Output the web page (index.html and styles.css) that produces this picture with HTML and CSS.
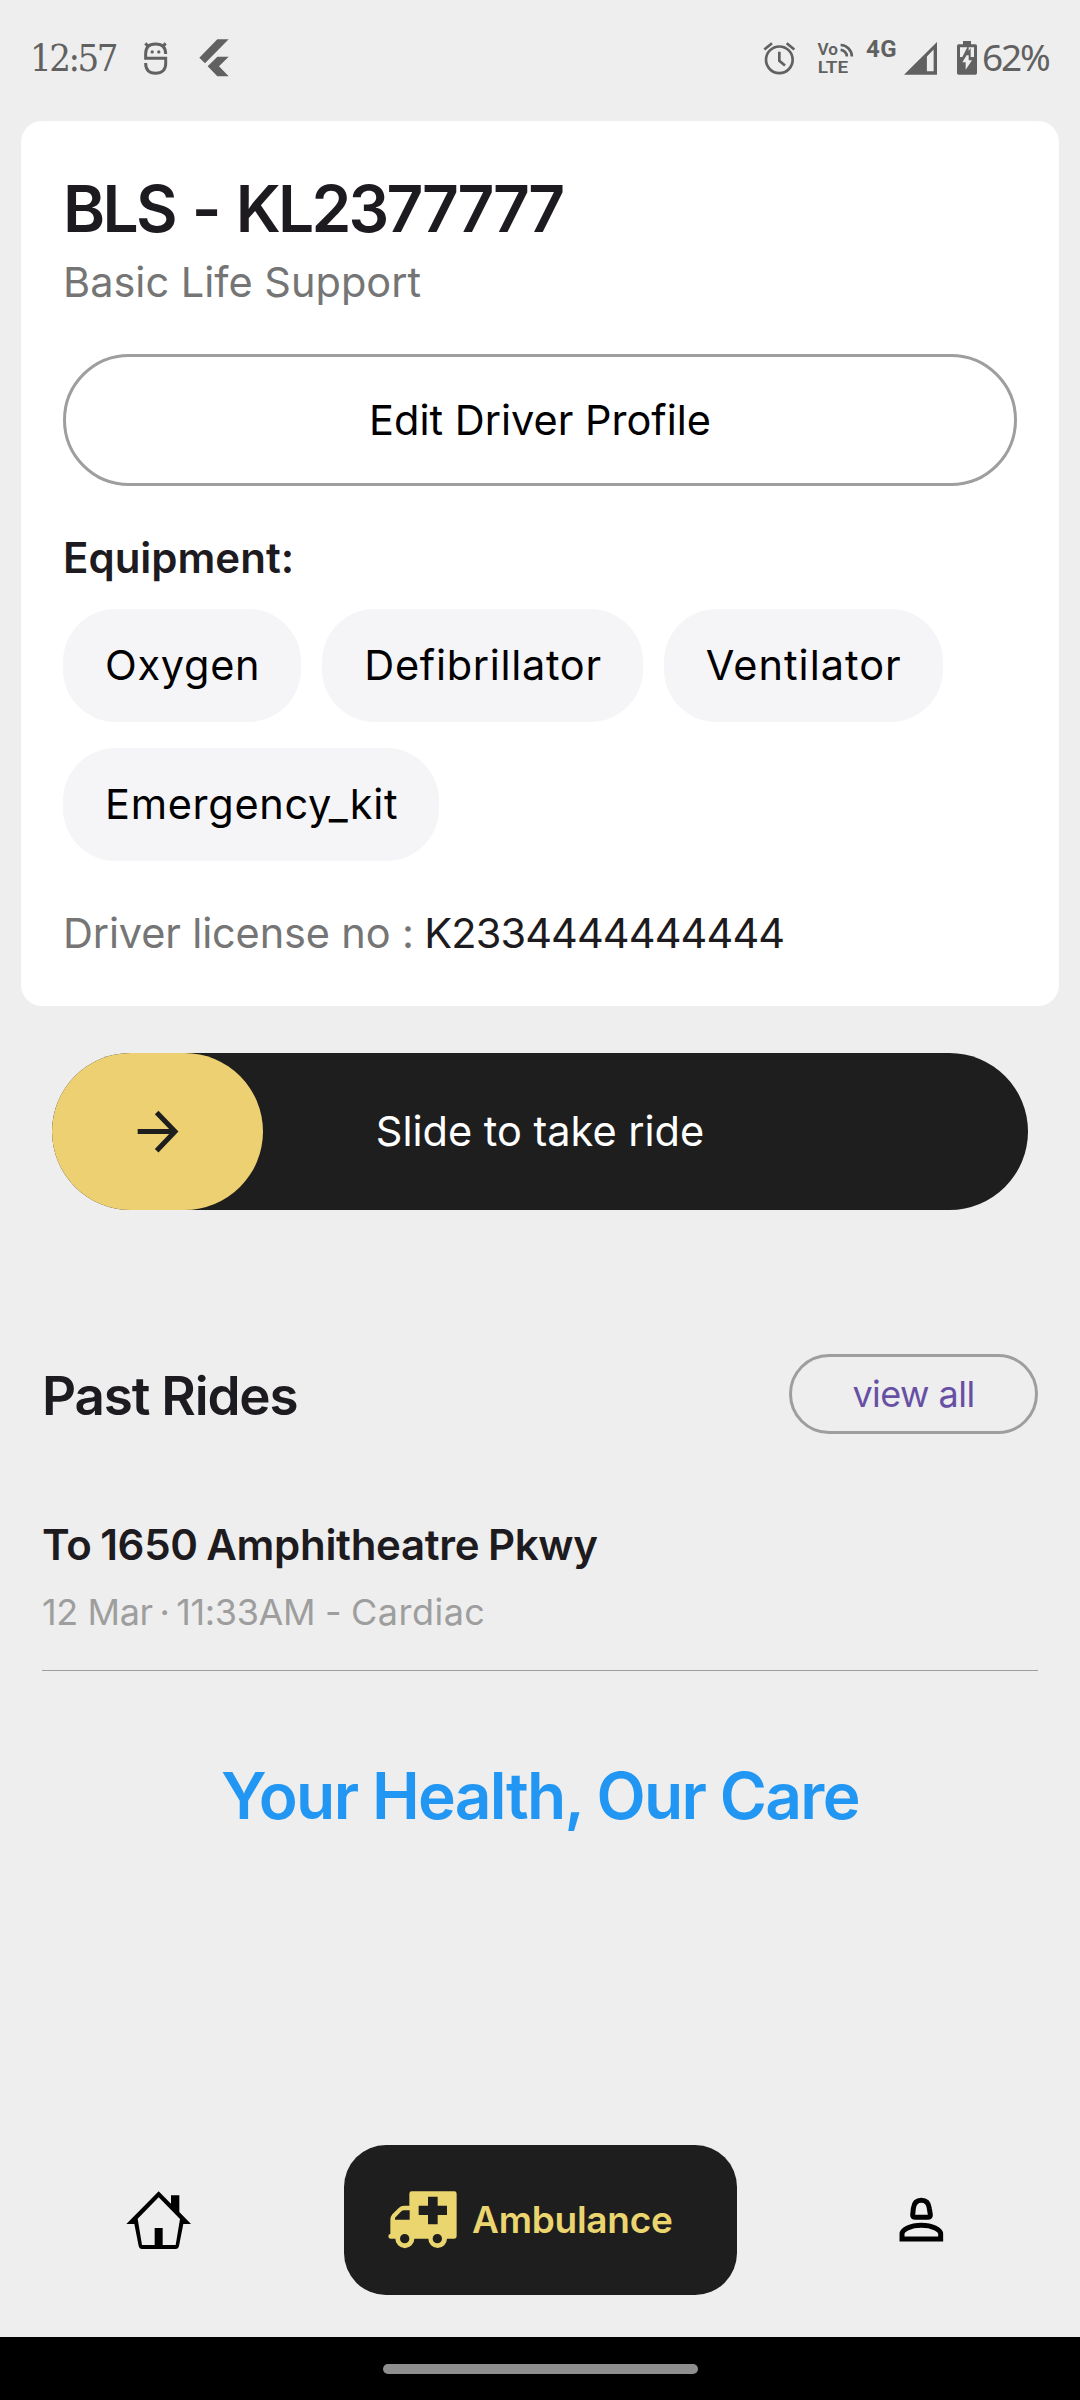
FILE: index.html
```
<!DOCTYPE html>
<html lang="en">
<head>
<meta charset="utf-8">
<title>Ambulance Driver</title>
<link rel="stylesheet" href="styles.css">
</head>
<body>
<header class="status">
  <div class="status-left">
    <span class="clock">12:57</span>
    <svg class="ic-debug" viewBox="430 122 76 104" fill="none" stroke="#616161" stroke-width="9">
      <path d="M499 160C499 140 488 130 468 130S438 140 438 160V173H499V190C499 208 488 219 468 219S438 208 438 188"/>
      <path d="M437 128l11 11M499 128l-11 11"/>
      <circle cx="458" cy="154" r="5" fill="#616161" stroke="none"/>
      <circle cx="478" cy="154" r="5" fill="#616161" stroke="none"/>
    </svg>
    <svg class="ic-flutter" viewBox="597 117 90 114" fill="#616161">
      <path d="M652 118H686L615 190L598 173ZM652 170H686L657 199L686 229H652L623 199Z"/>
    </svg>
  </div>
  <div class="status-right">
    <svg class="ic-alarm" viewBox="129 120 99 104" fill="none" stroke="#616161" stroke-width="8">
      <circle cx="178" cy="176" r="40"/>
      <path d="M133 145L156 126M223 145L200 126M178 152V179L195 193"/>
    </svg>
    <svg class="ic-volte" viewBox="290 122 111 100" fill="none" stroke="#616161" stroke-width="8">
      <text class="volte-text" x="291" y="161" textLength="62" lengthAdjust="spacingAndGlyphs">Vo</text>
      <text class="volte-text" x="292" y="216" textLength="92" lengthAdjust="spacingAndGlyphs">LTE</text>
      <path d="M361 146A20 20 0 0 1 380 166M361 131A35 35 0 0 1 395 166"/>
    </svg>
    <span class="net">4G</span>
    <svg class="ic-signal" viewBox="553 121 98 98" fill="#616161" fill-rule="evenodd">
      <path d="M553 218L651 121V218ZM621 164V208H641V143Z"/>
    </svg>
    <svg class="ic-battery" viewBox="711 120 60 102" fill="#616161">
      <path d="M729 120H753V130H766Q771 130 771 135V216Q771 221 766 221H716Q711 221 711 216V135Q711 130 716 130H729Z"/>
      <path fill="#eee" d="M720 139H742L727 168H720ZM746 150V139H762V168H752V141ZM740 163L727 184H737V206L756 178H746V163Z"/>
    </svg>
    <span class="percent">62%</span>
  </div>
</header>

<main>
  <section class="card">
    <h1 class="vehicle">BLS - KL2377777</h1>
    <p class="kind">Basic Life Support</p>
    <button class="edit">Edit Driver Profile</button>
    <h2 class="equipment">Equipment:</h2>
    <ul class="chips">
      <li class="chip">Oxygen</li>
      <li class="chip">Defibrillator</li>
      <li class="chip chip-wide">Ventilator</li>
      <li class="chip">Emergency_kit</li>
    </ul>
    <p class="license">Driver license no : <span class="license-no">K2334444444444</span></p>
  </section>

  <div class="slider">
    <div class="thumb">
      <svg class="ic-arrow" viewBox="394 270 126 128" fill="none" stroke="#1e1e1e" stroke-width="15">
        <path d="M396 334H506M453 277L508 334L453 392"/>
      </svg>
    </div>
    <span class="slider-label">Slide to take ride</span>
  </div>

  <section class="rides">
    <div class="rides-head">
      <h2 class="rides-title">Past Rides</h2>
      <button class="view-all">view all</button>
    </div>
    <article class="ride">
      <h3 class="ride-to">To 1650 Amphitheatre Pkwy</h3>
      <p class="ride-info">12 Mar<span class="dot"> · </span>11:33AM - <span class="reason">Cardiac</span></p>
    </article>
  </section>
  <p class="slogan">Your Health, Our Care</p>
</main>

<nav class="tabs">
  <a class="tab">
    <svg class="ic-home" viewBox="108 213 198 177" fill-rule="evenodd">
      <path d="M109 312L206 214L243 251V226H268V276L303 312H280L267 378Q265 387 257 387H156Q148 387 146 378L133 312ZM206 232L143 296L156 375H194V324H218V375H257L270 297Z"/>
    </svg>
  </a>
  <a class="tab tab-active">
    <svg class="ic-ambulance" viewBox="174 214 207 172" fill="#ead56f" fill-rule="evenodd">
      <path d="M245 215H373Q380 215 380 222V350Q380 357 373 357H351A28 28 0 0 1 295 357H253A28 28 0 0 1 196 357H181A6 7 0 0 1 181 343V300Q181 291 187 284L206 265Q213 258 222 258H238V222Q238 215 245 215ZM239 272H222Q217 272 214 275L195 294V300H239ZM294 231V258H266V286H294V314H323V286H351V258H323V231ZM238 357A14 14 0 1 0 210 357A14 14 0 1 0 238 357ZM336 357A14 14 0 1 0 308 357A14 14 0 1 0 336 357Z"/>
    </svg>
    <span class="tab-label">Ambulance</span>
  </a>
  <a class="tab">
    <svg class="ic-person" viewBox="176 172 134 136" fill="none" stroke="#000" stroke-width="15">
      <path d="M217 226L219 206Q222 182 243 182T267 206L270 226Q270 233 262 233H225Q217 233 217 226Z"/>
      <path d="M185 298V283C185 270 210 257 243 257S301 270 301 283V298Z"/>
    </svg>
  </a>
</nav>
<footer class="gesture"><div class="handle"></div></footer>
</body>
</html>
```
FILE: styles.css
```
* { box-sizing: border-box; margin: 0; padding: 0; }
body {
  width: 1080px; height: 2400px; background: #eee; color: #1d1b20;
  font: 400 41.5px/60px Inter, sans-serif;
  display: flex; flex-direction: column; overflow: hidden;
}
h1, h2, h3 { font-weight: 600; }
button { font: inherit; background: none; border: 3px solid #9e9e9e; }
svg { display: block; flex: none; }
ul { list-style: none; }

.status {
  height: 121px; padding: 0 31px 5px 30px; color: #616161;
  display: flex; justify-content: space-between; align-items: center;
}
.status-left, .status-right { display: flex; align-items: center; }
.clock { width: 113px; font: 38px/50px "DejaVu Serif Condensed", "DejaVu Serif", serif; letter-spacing: -2.5px; white-space: nowrap; }
.ic-debug { width: 25px; height: 35px; }
.ic-flutter { width: 30px; height: 38px; margin-left: 31px; }
.ic-alarm { width: 33px; height: 35px; }
.ic-volte { width: 37px; height: 33px; margin: 0 12px 0 21px; overflow: visible; }
.volte-text { font: 600 49px Roboto, sans-serif; fill: #616161; stroke: none; }
.net { width: 38px; font: 700 24px/28px Roboto, sans-serif; letter-spacing: .6px; padding-bottom: 18px; }
.ic-signal { width: 33px; height: 33px; margin-right: 20px; }
.ic-battery { width: 20px; height: 34px; }
.percent { width: 72px; padding-left: 5px; font: 37px/50px "Noto Sans", sans-serif; letter-spacing: -2.2px; padding-bottom: 2px; white-space: nowrap; }

.card { margin: 0 21px; height: 885px; padding: 42px; background: #fff; border-radius: 21px; }
.vehicle { font-size: 64px; line-height: 91px; letter-spacing: -2.7px; word-spacing: 3.4px; }
.kind { padding-top: 1px; line-height: 54px; color: #757575; }
.edit { display: block; width: 100%; height: 132px; margin-top: 45px; border-radius: 66px; color: #000; }
.equipment { margin-top: 42px; font-size: 42px; letter-spacing: 0; }
.chips { display: flex; flex-wrap: wrap; gap: 26px 21px; margin-top: 21px; }
.chip {
  height: 113px; padding: 0 41px 0 42px; border-radius: 52.5px; background: #f5f5f7;
  color: #000; line-height: 112px; letter-spacing: .7px;
}
.chip-wide { letter-spacing: 1px; }
.license { margin-top: 42px; color: #757575; letter-spacing: -.15px; }
.license-no { color: #1d1b20; letter-spacing: -.9px; margin-left: -1px; }

.slider {
  margin: 47px 52px 0; height: 157px; border-radius: 79px; background: #1e1e1e; color: #fff;
  display: grid; grid-template-columns: 211px 1fr 211px; align-items: center;
}
.thumb { height: 157px; border-radius: 79px; background: #ecd072; display: flex; align-items: center; justify-content: center; }
.ic-arrow { width: 42px; height: 43px; }
.slider-label { text-align: center; padding-bottom: 2px; }

.rides { margin: 144px 42px 0; }
.rides-head { display: flex; justify-content: space-between; align-items: center; height: 80px; }
.rides-title { font-size: 53px; letter-spacing: -1.2px; padding-top: 3px; }
.view-all { width: 249px; height: 80px; border-radius: 40px; font-size: 36px; line-height: 74px; letter-spacing: -.54px; color: #6750a4; }
.ride { margin-top: 81px; padding-bottom: 32px; border-bottom: 1px solid #9e9e9e; }
.ride-to { font-size: 42px; letter-spacing: -.32px; word-spacing: -1.5px; }
.ride-info { margin-top: 11px; font-size: 36px; line-height: 52px; letter-spacing: -.37px; color: #9e9e9e; }
.dot { word-spacing: -3px; }
.reason { letter-spacing: .5px; }
.slogan { margin-top: 85px; text-align: center; font-size: 64px; font-weight: 600; line-height: 80px; letter-spacing: -1.65px; color: #2196f3; }

.tabs {
  margin-top: auto; margin-bottom: 42px; height: 150px;
  display: grid; grid-template-columns: 317px 393px 317px; column-gap: 26.5px;
}
.tab { display: flex; align-items: center; justify-content: center; }
.tab-active { justify-content: flex-start; padding-left: 44.5px; gap: 15px; background: #1e1e1e; border-radius: 42px; }
.tab-label { font-size: 37px; font-weight: 600; letter-spacing: -.26px; color: #ead56f; }
.ic-home { width: 66px; height: 59px; }
.ic-ambulance { width: 69px; height: 57.3px; }
.ic-person { width: 44.7px; height: 45.3px; }
.gesture { height: 63px; background: #000; display: flex; justify-content: center; padding-top: 27px; }
.handle { width: 315px; height: 10px; border-radius: 5px; background: #8e8e8e; }
```
